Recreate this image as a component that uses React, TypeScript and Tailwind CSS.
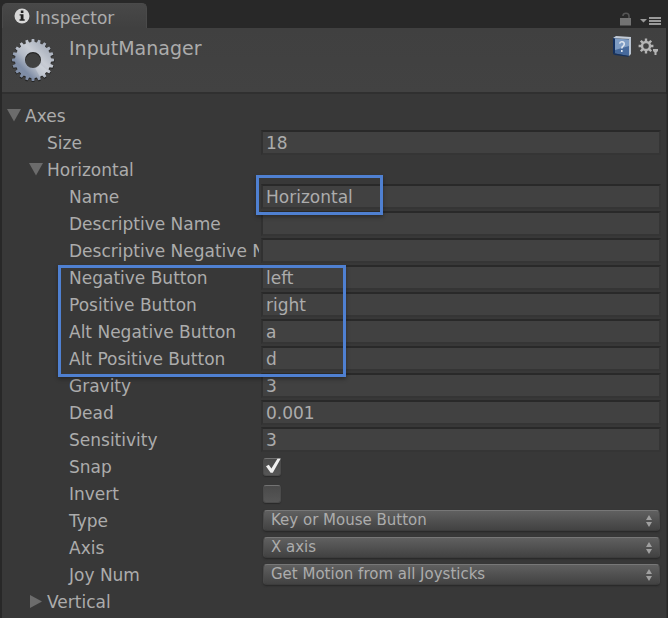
import { useState } from "react";
import type { ReactNode } from "react";

function Highlight({ className }: { className: string }) {
  return (
    <div
      className={`pointer-events-none absolute z-10 border-3 border-[#4f80d1] shadow-[0_2px_4px_rgba(0,0,0,0.35)] ${className}`}
    />
  );
}

type RowProps = { id: string; label: string; indent?: string; children: ReactNode };

function Row({ id, label, indent = "pl-[67px]", children }: RowProps) {
  return (
    <div className="relative grid h-[27px] grid-cols-[257px_1fr] items-center gap-x-0.5 pr-[5px]">
      <label htmlFor={id} className={`overflow-hidden whitespace-nowrap ${indent}`}>
        {label}
      </label>
      {children}
    </div>
  );
}

function TextRow({
  id,
  label,
  value,
  indent,
  marked,
}: {
  id: string;
  label: string;
  value: string;
  indent?: string;
  marked?: boolean;
}) {
  return (
    <Row id={id} label={label} indent={indent}>
      <input
        id={id}
        type="text"
        defaultValue={value}
        className="h-[25px] w-full min-w-0 border-2 border-t-[#292929] border-r-[#353535] border-b-[#353535] border-l-[#313131] bg-[#414141] px-[3px] leading-5 outline-none"
      />
      {marked && <Highlight className="-top-2 left-[254px] h-10 w-[127px]" />}
    </Row>
  );
}

function CheckRow({ id, label, initial }: { id: string; label: string; initial: boolean }) {
  const [on, setOn] = useState(initial);
  return (
    <Row id={id} label={label}>
      <span className="relative ml-0.5 size-[18px]">
        <input
          id={id}
          type="checkbox"
          checked={on}
          onChange={(e) => setOn(e.target.checked)}
          className="block size-[18px] appearance-none rounded-[3px] border border-[#4b4b4b] border-t-[#737373] bg-linear-to-b from-[#4a4a4a] to-[#565656] shadow-[0_1px_1px_#2a2a2a]"
        />
        {on && (
          <svg
            viewBox="0 0 18 18"
            className="pointer-events-none absolute inset-0 size-[18px]"
            fill="#f0f0f0"
            aria-hidden="true"
          >
            <path d="M3 8.2L5.8 6.8L8.4 10.4L14.4 0.8L17.8 0.6L9.8 14.8L7.6 14.8Z" />
          </svg>
        )}
      </span>
    </Row>
  );
}

function SelectRow({ id, label, options }: { id: string; label: string; options: string[] }) {
  return (
    <Row id={id} label={label}>
      <span className="relative mr-px ml-0.5 block">
        <select
          id={id}
          className="block h-[21px] w-full appearance-none rounded-[4px] border border-[#4a4a4a] border-t-[#777777] border-b-[#3c3c3c] bg-linear-to-b from-[#606060] to-[#424242] pr-6 pl-[7px] text-[15px] leading-[19px] shadow-[0_1px_2px_#262626] outline-none"
        >
          {options.map((o) => (
            <option key={o}>{o}</option>
          ))}
        </select>
        <svg
          viewBox="0 0 8 12"
          className="pointer-events-none absolute top-[5px] right-[7px] h-3 w-2"
          fill="#a0a0a0"
          aria-hidden="true"
        >
          <path d="M4 0L7 5H1ZM4 12L7 7H1Z" />
        </svg>
      </span>
    </Row>
  );
}

function Foldout({ label, open, indent }: { label: string; open: boolean; indent: string }) {
  return (
    <button type="button" aria-expanded={open} className={`flex h-[27px] w-full items-center text-left ${indent}`}>
      <svg viewBox="0 0 14 14" className="size-3.5" fill="#6c6c6c" aria-hidden="true">
        {open ? <path d="M0 0H14L7 12.5Z" /> : <path d="M1 0L13 6.5L1 13Z" />}
      </svg>
      <span className="ml-1">{label}</span>
    </button>
  );
}

function gearPath(c: number, outer: number, root: number, hole: number, teeth: number) {
  const pt = (r: number, a: number) => `${(c + r * Math.sin(a)).toFixed(2)} ${(c - r * Math.cos(a)).toFixed(2)}`;
  const step = (Math.PI * 2) / teeth;
  const pts: string[] = [];
  for (let i = 0; i < teeth; i++) {
    const a = i * step;
    pts.push(pt(root, a - step * 0.3), pt(outer, a - step * 0.2), pt(outer, a + step * 0.2), pt(root, a + step * 0.3));
  }
  return `M${pts.join("L")}ZM${c - hole} ${c}a${hole} ${hole} 0 1 0 ${hole * 2} 0a${hole} ${hole} 0 1 0 ${-hole * 2} 0Z`;
}

function AssetGear() {
  return (
    <svg viewBox="0 0 44 44" className="size-11" aria-hidden="true">
      <defs>
        <linearGradient id="steel" x1="0.1" y1="0.9" x2="0.9" y2="0.1">
          <stop offset="0" stopColor="#8290a8" />
          <stop offset="0.22" stopColor="#7f8da6" />
          <stop offset="0.42" stopColor="#b3bac6" />
          <stop offset="0.62" stopColor="#c9cdd5" />
          <stop offset="0.8" stopColor="#b4bac5" />
          <stop offset="1" stopColor="#a3abb9" />
        </linearGradient>
      </defs>
      <path d={gearPath(22, 21.5, 18.5, 7.5, 20)} fill="#252525" fillRule="evenodd" transform="translate(0 0.8)" />
      <path d={gearPath(22, 21, 18, 8, 20)} fill="url(#steel)" fillRule="evenodd" />
      <path d="M29 26L37 33A19 19 0 0 1 29 39L24 30Z" fill="#ffffff" opacity="0.2" />
    </svg>
  );
}

export default function App() {
  return (
    <main className="bg-[#282828] px-0.5 font-['DejaVu_Sans',sans-serif] text-[17px] leading-5 text-[#acacac]">
      <div className="flex h-7 items-end justify-between pr-1">
        <div className="flex h-[25px] w-[145px] items-end gap-[5px] rounded-t-[5px] border border-b-0 border-[#4a4a4a] bg-linear-to-b from-[#484848] to-[#404040] pl-[11px]">
          <svg viewBox="0 0 16 16" className="mb-1 size-4" aria-hidden="true">
            <circle cx="8" cy="8" r="7.5" fill="#d8d8d8" />
            <path d="M6.8 2.6h2.6v2.3H6.8zM5.6 6.2h3.9v5h1.2v1.5H5.5v-1.5h1.2V7.6H5.6z" fill="#222222" />
          </svg>
          <span>Inspector</span>
        </div>
        <div className="flex items-end gap-2 pb-0.5">
          <button type="button" aria-label="Lock" className="block">
            <svg viewBox="0 0 13 14" className="h-3.5 w-[13px]" aria-hidden="true">
              <path d="M4 4V3.4Q4.2 1.2 7 1.2Q10 1.2 10 4V7" fill="none" stroke="#565656" strokeWidth="1.5" />
              <rect x="1" y="6" width="11" height="7.5" fill="#737373" />
            </svg>
          </button>
          <button type="button" aria-label="Panel menu" className="block">
            <svg viewBox="0 0 22 10" className="h-2.5 w-[22px]" fill="#9a9a9a" aria-hidden="true">
              <path d="M0 3h7L3.5 6.5ZM9 1h12v2H9zM9 4h12v2H9zM9 7h12v2H9z" />
            </svg>
          </button>
        </div>
      </div>

      <header className="flex h-[66px] items-start border-b-2 border-[#303030] bg-linear-to-b from-[#404040] to-[#424242] pt-2.5 pr-[7px] pl-[9px]">
        <AssetGear />
        <h1 className="ml-3.5 flex-1 text-[19px]">InputManager</h1>
        <button type="button" aria-label="Help" className="-mt-[3px]">
          <svg viewBox="0 0 20 22" className="h-[22px] w-5" aria-hidden="true">
            <path d="M1 3L4 1V18L1 19Z" fill="#14305d" />
            <path d="M1 3L4 1L19 2V4L4 3.5Z" fill="#c3ccd8" />
            <path d="M3 3.5L17 4.5V21L3 18.5Z" fill="#46699b" />
            <path d="M3 3.5L17 4.5V11L3 15Z" fill="#7e9cc3" />
            <path d="M17 4L19 2.5V19L17 21Z" fill="#b9c3d0" />
            <path d="M1 19L3 18.5L17 21L16 21.8L3 20Z" fill="#14305d" />
            <path d="M7.6 8.7Q8 6.6 10 6.8Q12.5 7 12.2 9.3Q12 10.7 10.5 11.6Q9.9 12.2 9.9 13.4M9.8 15V17" fill="none" stroke="#dde4ee" strokeWidth="1.6" />
          </svg>
        </button>
        <button type="button" aria-label="Settings" className="ml-1.5">
          <svg viewBox="0 0 21 18" className="h-[18px] w-[21px]" fill="#b4b4b4" aria-hidden="true">
            <path d={gearPath(8, 7.5, 5.2, 2.8, 8)} fillRule="evenodd" />
            <path d="M15 11h5v2l-1.5 1.5V17h-2v-2.5L15 13Z" />
          </svg>
        </button>
      </header>

      <section className="-mr-px border-r border-[#303030] bg-[#383838] pt-2 pb-1">
        <Foldout label="Axes" open indent="pl-[5px]" />
        <TextRow id="size" label="Size" value="18" indent="pl-[45px]" />
        <Foldout label="Horizontal" open indent="pl-[27px]" />
        <TextRow id="name" label="Name" value="Horizontal" marked />
        <TextRow id="descriptive-name" label="Descriptive Name" value="" />
        <TextRow id="descriptive-negative-name" label="Descriptive Negative Name" value="" />
        <div className="relative">
          <TextRow id="negative-button" label="Negative Button" value="left" />
          <TextRow id="positive-button" label="Positive Button" value="right" />
          <TextRow id="alt-negative-button" label="Alt Negative Button" value="a" />
          <TextRow id="alt-positive-button" label="Alt Positive Button" value="d" />
          <Highlight className="top-px -bottom-[5px] left-14 w-[288px]" />
        </div>
        <TextRow id="gravity" label="Gravity" value="3" />
        <TextRow id="dead" label="Dead" value="0.001" />
        <TextRow id="sensitivity" label="Sensitivity" value="3" />
        <CheckRow id="snap" label="Snap" initial />
        <CheckRow id="invert" label="Invert" initial={false} />
        <SelectRow id="type" label="Type" options={["Key or Mouse Button", "Mouse Movement", "Joystick Axis"]} />
        <SelectRow id="axis" label="Axis" options={["X axis", "Y axis"]} />
        <SelectRow id="joy-num" label="Joy Num" options={["Get Motion from all Joysticks", "Joystick 1"]} />
        <Foldout label="Vertical" open={false} indent="pl-[27px]" />
      </section>
    </main>
  );
}
